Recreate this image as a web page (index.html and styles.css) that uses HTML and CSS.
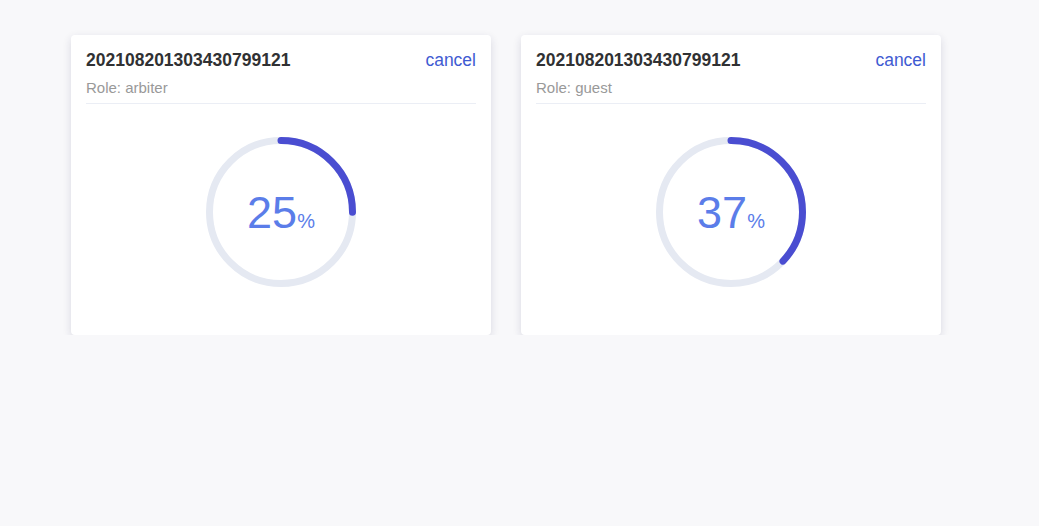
FILE: index.html
```html
<!DOCTYPE html>
<html>
<head>
<meta charset="utf-8">
<link rel="stylesheet" href="styles.css">
</head>
<body>
<div class="list">
  <div class="card">
    <div class="head">
      <div class="row">
        <span class="title">202108201303430799121</span>
        <a class="cancel">cancel</a>
      </div>
      <div class="role">Role: arbiter</div>
    </div>
    <div class="body">
      <div class="ring">
        <svg width="150" height="150" viewBox="0 0 150 150">
          <circle class="track" cx="75" cy="75" r="71.5"/>
          <circle class="bar" cx="75" cy="75" r="71.5" style="stroke-dasharray: 112.3 449.25"/>
        </svg>
        <div class="pct"><span class="num">25</span><span class="sign">%</span></div>
      </div>
    </div>
  </div>
  <div class="card">
    <div class="head">
      <div class="row">
        <span class="title">202108201303430799121</span>
        <a class="cancel">cancel</a>
      </div>
      <div class="role">Role: guest</div>
    </div>
    <div class="body">
      <div class="ring">
        <svg width="150" height="150" viewBox="0 0 150 150">
          <circle class="track" cx="75" cy="75" r="71.5"/>
          <circle class="bar" cx="75" cy="75" r="71.5" style="stroke-dasharray: 166.2 449.25"/>
        </svg>
        <div class="pct"><span class="num">37</span><span class="sign">%</span></div>
      </div>
    </div>
  </div>
</div>
</body>
</html>
```

FILE: styles.css
```css
html, body {
  margin: 0;
  padding: 0;
  background: #f8f8fa;
  font-family: "Liberation Sans", Arial, sans-serif;
}
.list {
  display: flex;
  gap: 30px;
  padding: 35px 0 0 71px;
}
.card {
  width: 420px;
  box-sizing: border-box;
  background: #fff;
  border-radius: 4px;
  box-shadow: 0 3px 8px rgba(30, 30, 80, 0.14);
  padding: 15px 15px 0;
}
.head {
  border-bottom: 1px solid #ebeef5;
  padding-bottom: 5px;
}
.row {
  display: flex;
  justify-content: space-between;
  align-items: center;
  height: 20px;
}
.title {
  font-size: 17.5px;
  font-weight: bold;
  color: #303133;
}
.cancel {
  font-size: 17.5px;
  color: #3f5bd2;
  cursor: pointer;
}
.role {
  margin-top: 8px;
  height: 20px;
  line-height: 20px;
  font-size: 15px;
  color: #999;
}
.body {
  display: flex;
  justify-content: center;
  padding: 33px 0 48px;
}
.ring {
  display: grid;
  width: 150px;
  height: 150px;
}
.ring > * {
  grid-area: 1 / 1;
}
svg {
  display: block;
}
.track, .bar {
  fill: none;
  stroke-width: 7;
}
.track {
  stroke: #e5e9f2;
}
.bar {
  stroke: #4a4dd1;
  stroke-linecap: round;
  transform: rotate(-90deg);
  transform-origin: 75px 75px;
}
.pct {
  align-self: center;
  justify-self: center;
  color: #5b7de9;
  line-height: 1;
  white-space: nowrap;
}
.num {
  font-size: 45px;
}
.sign {
  font-size: 20px;
}
```
